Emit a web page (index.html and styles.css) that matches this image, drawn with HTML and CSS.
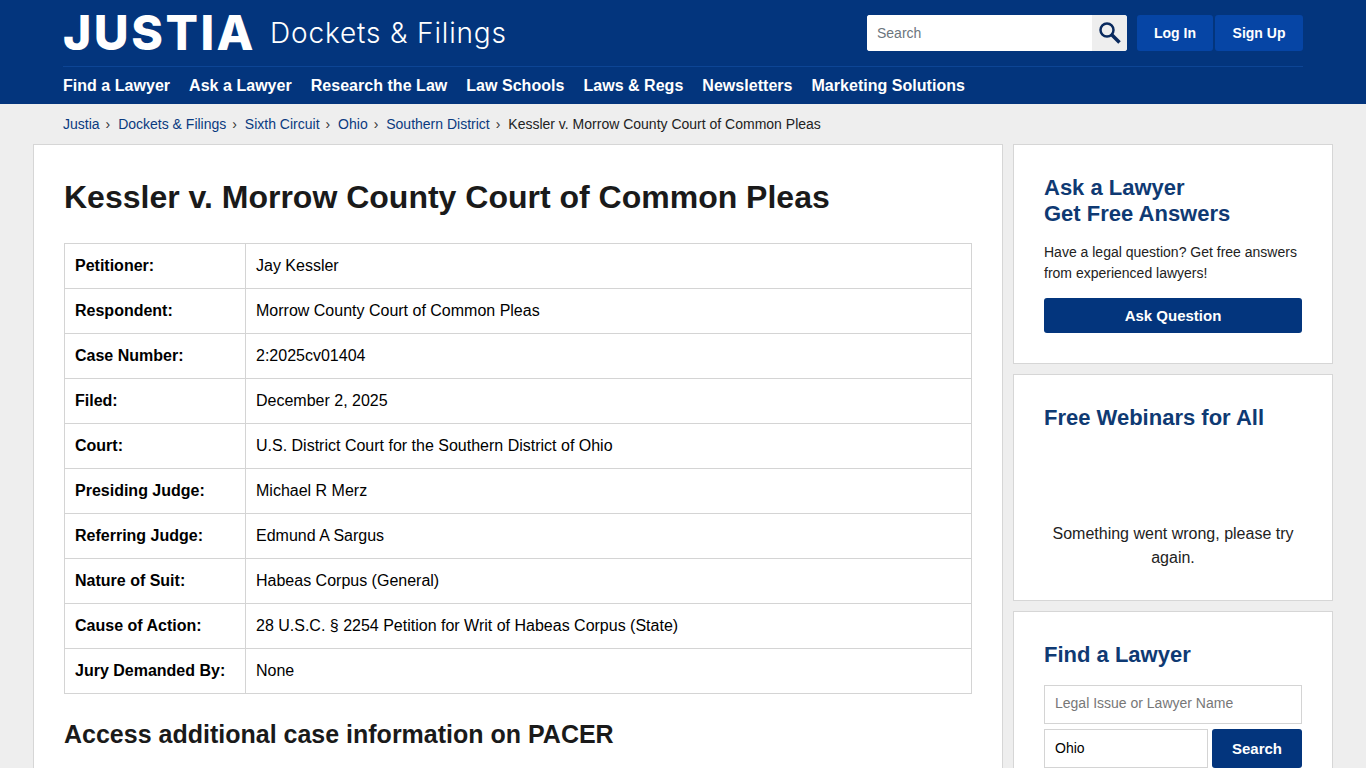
FILE: index.html
```html
<!DOCTYPE html>
<html lang="en">
<head>
    <meta charset="UTF-8">
    <meta name="viewport" content="width=device-width, initial-scale=1.0">
    <title>Kessler v. Morrow County Court of Common Pleas</title>
    <link rel="stylesheet" href="styles.css">
</head>
<body>
    <header class="site-header">
        <div class="header-top">
            <a href="#" class="logo"><span class="logo-name">JUSTIA</span><span class="logo-section">Dockets &amp; Filings</span></a>
            <div class="header-actions">
                <form class="header-search">
                    <input type="text" placeholder="Search">
                    <button type="button" aria-label="Search">
                        <svg width="24" height="24" viewBox="0 0 24 24" fill="none" stroke="#0a2a5e">
                            <circle cx="9" cy="9" r="6.5" stroke-width="2.5"/>
                            <path d="M14 14l7.5 7.5" stroke-width="3.6"/>
                        </svg>
                    </button>
                </form>
                <a href="#" class="btn-account">Log In</a>
                <a href="#" class="btn-account">Sign Up</a>
            </div>
        </div>
        <nav class="main-nav">
            <a href="#">Find a Lawyer</a>
            <a href="#">Ask a Lawyer</a>
            <a href="#">Research the Law</a>
            <a href="#">Law Schools</a>
            <a href="#">Laws &amp; Regs</a>
            <a href="#">Newsletters</a>
            <a href="#">Marketing Solutions</a>
        </nav>
    </header>

    <div class="breadcrumbs">
        <a href="#">Justia</a><span>›</span>
        <a href="#">Dockets &amp; Filings</a><span>›</span>
        <a href="#">Sixth Circuit</a><span>›</span>
        <a href="#">Ohio</a><span>›</span>
        <a href="#">Southern District</a><span>›</span>
        <b>Kessler v. Morrow County Court of Common Pleas</b>
    </div>

    <div class="layout">
        <main class="card main-card">
            <h1>Kessler v. Morrow County Court of Common Pleas</h1>
            <table class="case-table">
                <tr><th>Petitioner:</th><td>Jay Kessler</td></tr>
                <tr><th>Respondent:</th><td>Morrow County Court of Common Pleas</td></tr>
                <tr><th>Case Number:</th><td>2:2025cv01404</td></tr>
                <tr><th>Filed:</th><td>December 2, 2025</td></tr>
                <tr><th>Court:</th><td>U.S. District Court for the Southern District of Ohio</td></tr>
                <tr><th>Presiding Judge:</th><td>Michael R Merz</td></tr>
                <tr><th>Referring Judge:</th><td>Edmund A Sargus</td></tr>
                <tr><th>Nature of Suit:</th><td>Habeas Corpus (General)</td></tr>
                <tr><th>Cause of Action:</th><td>28 U.S.C. § 2254 Petition for Writ of Habeas Corpus (State)</td></tr>
                <tr><th>Jury Demanded By:</th><td>None</td></tr>
            </table>
            <h2>Access additional case information on PACER</h2>
        </main>

        <aside class="sidebar">
            <section class="card side-card ask-card">
                <h3>Ask a Lawyer<br>Get Free Answers</h3>
                <p>Have a legal question? Get free answers from experienced lawyers!</p>
                <a href="#" class="btn-primary">Ask Question</a>
            </section>
            <section class="card side-card webinar-card">
                <h3>Free Webinars for All</h3>
                <p class="webinar-error">Something went wrong, please try again.</p>
            </section>
            <section class="card side-card find-card">
                <h3>Find a Lawyer</h3>
                <input type="text" class="field" placeholder="Legal Issue or Lawyer Name">
                <div class="find-row">
                    <input type="text" class="field" value="Ohio">
                    <a href="#" class="btn-primary">Search</a>
                </div>
            </section>
        </aside>
    </div>
</body>
</html>
```

FILE: styles.css
```css
* {
    box-sizing: border-box;
}

html {
    height: 100%;
    overflow: hidden;
}

body {
    font-family: "Liberation Sans", Arial, sans-serif;
    background-color: #eeeeee;
    color: #000;
    margin: 0;
    font-size: 16px;
}

a {
    text-decoration: none;
}

/* Cabecera */
.site-header {
    background-color: #03357d;
    height: 104px;
    padding: 0 63px;
}

.header-top {
    display: flex;
    justify-content: space-between;
    align-items: flex-start;
    height: 67px;
    border-bottom: 1px solid #0d4595;
}

.logo {
    display: flex;
    align-items: center;
    height: 66px;
    color: #fff;
}

.logo-name {
    font-family: Inter, sans-serif;
    font-weight: 800;
    font-size: 48px;
    line-height: 58px;
    letter-spacing: 2.5px;
}

.logo-section {
    font-family: Inter, sans-serif;
    font-weight: 300;
    font-size: 28px;
    margin-left: 14px;
    letter-spacing: 0.85px;
}

.header-actions {
    display: flex;
    margin-top: 15px;
}

.header-search {
    display: flex;
    width: 260px;
    height: 36px;
    margin-right: 10px;
    border-radius: 3px;
    overflow: hidden;
    background-color: #fff;
}

.header-search input {
    flex: 1;
    min-width: 0;
    border: none;
    padding: 0 10px;
    font-family: inherit;
    font-size: 14px;
}

.header-search input::placeholder {
    color: #6c757d;
}

.header-search button {
    width: 35px;
    padding: 0;
    border: none;
    background-color: #eeeeee;
    display: flex;
    align-items: center;
    justify-content: center;
}

.btn-account {
    height: 36px;
    line-height: 36px;
    width: 76px;
    margin-right: 2px;
    border-radius: 3px;
    background-color: #0645a5;
    color: #fff;
    font-size: 14px;
    font-weight: bold;
    text-align: center;
}

.btn-account:last-child {
    width: 88px;
    margin-right: 0;
}

.main-nav {
    display: flex;
    gap: 19px;
    padding-top: 9px;
}

.main-nav a {
    color: #fff;
    font-weight: bold;
    font-size: 16px;
    line-height: 20px;
    letter-spacing: 0.03px;
}

/* Migas */
.breadcrumbs {
    padding: 0 63px;
    height: 40px;
    line-height: 40px;
    font-size: 14px;
}

.breadcrumbs a {
    color: #0a3a80;
}

.breadcrumbs span {
    margin: 0 4px 0 6px;
    color: #333;
}

.breadcrumbs b {
    font-weight: normal;
    color: #222;
}

/* Columnas */
.layout {
    display: flex;
    gap: 10px;
    padding-left: 33px;
    align-items: flex-start;
}

.card {
    background-color: #fff;
    border: 1px solid #d6d6d6;
}

.main-card {
    width: 970px;
    padding: 30px;
    height: 800px;
}

h1 {
    margin: 0 0 24px;
    font-size: 32px;
    line-height: 44px;
    color: #1a1a1a;
}

.case-table {
    width: 908px;
    border-collapse: collapse;
    table-layout: fixed;
    border: 1px solid #d4d4d4;
}

.case-table th,
.case-table td {
    height: 45px;
    padding: 0 10px;
    border: 1px solid #d4d4d4;
    text-align: left;
    font-size: 16px;
}

.case-table th {
    width: 181px;
}

h2 {
    margin: 22px 0 0;
    font-size: 25px;
    line-height: 36px;
    color: #1a1a1a;
}

.sidebar {
    width: 320px;
    display: flex;
    flex-direction: column;
    gap: 10px;
}

.side-card {
    padding: 30px;
}

.side-card h3 {
    margin: 0;
    font-size: 22px;
    line-height: 26px;
    color: #0f3a73;
}

.ask-card {
    height: 220px;
}

.ask-card p {
    margin: 15px 0 14px;
    font-size: 14px;
    line-height: 21px;
    color: #222;
}

.btn-primary {
    display: block;
    height: 35px;
    line-height: 35px;
    background-color: #03357d;
    border-radius: 3px;
    color: #fff;
    font-weight: bold;
    font-size: 15px;
    text-align: center;
}

.webinar-card {
    height: 227px;
}

.webinar-error {
    margin: 91px 0 0;
    text-align: center;
    line-height: 24px;
    color: #222;
}

.find-card {
    height: 200px;
}

.field {
    display: block;
    width: 100%;
    height: 39px;
    margin-top: 17px;
    padding: 0 10px 3px;
    border: 1px solid #d4d4d4;
    font-family: inherit;
    font-size: 14px;
}

.field::placeholder {
    color: #777;
}

.find-row {
    display: flex;
    gap: 4px;
    margin-top: 5px;
}

.find-row .field {
    margin-top: 0;
    width: 164px;
    padding-bottom: 2px;
}

.find-row .btn-primary {
    width: 90px;
    height: 39px;
    line-height: 39px;
}
```
